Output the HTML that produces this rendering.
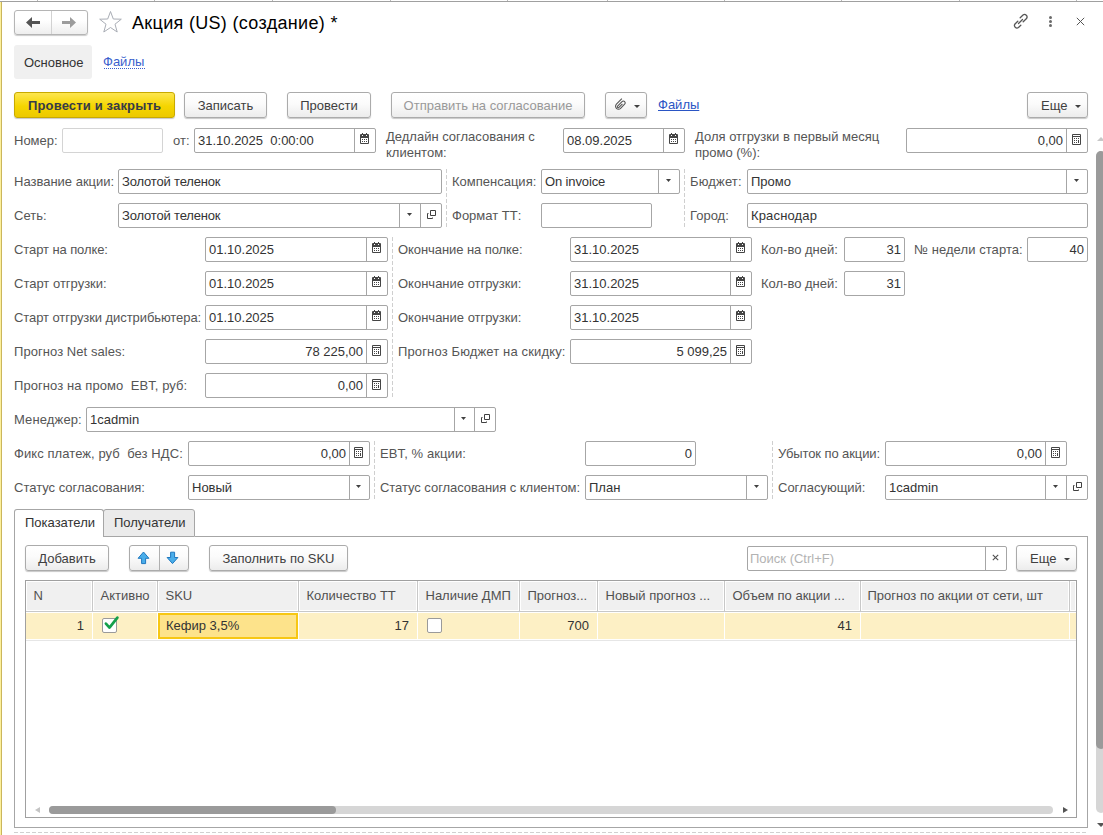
<!DOCTYPE html><html><head><meta charset="utf-8"><style>
*{box-sizing:border-box;margin:0;padding:0}
html,body{width:1103px;height:835px;overflow:hidden;background:#fff}
body{position:relative;font-family:"Liberation Sans",sans-serif;font-size:13px;color:#4d4d4d}
.a{position:absolute}
.l{position:absolute;white-space:nowrap;color:#555;line-height:25px;height:25px}
.f{position:absolute;height:25px;border:1px solid #a6a6a6;border-radius:2px;background:#fff}
.t{position:absolute;top:0;line-height:23px;white-space:nowrap;color:#333}
.d{position:absolute;top:0;width:1px;height:23px;background:#a6a6a6}
.btn{position:absolute;height:26px;border:1px solid #ababab;border-radius:3px;background:linear-gradient(#fff 0%,#fbfbfb 45%,#ececec 100%);box-shadow:0 1px 1px rgba(0,0,0,.22);color:#404040;text-align:center;line-height:25px;white-space:nowrap}
.vd{position:absolute;width:1px;background-image:linear-gradient(#cfcfcf 4px,transparent 4px);background-size:1px 6px}
</style></head><body>
<div class="a" style="left:0;top:1px;width:1103px;height:1px;background:#a0a0a0"></div>
<div class="a" style="left:37px;top:0;width:1px;height:1px;background:#b8b8b8"></div>
<div class="a" style="left:154px;top:0;width:1px;height:1px;background:#b8b8b8"></div>
<div class="a" style="left:272px;top:0;width:1px;height:1px;background:#b8b8b8"></div>
<div class="a" style="left:390px;top:0;width:1px;height:1px;background:#b8b8b8"></div>
<div class="a" style="left:507px;top:0;width:1px;height:1px;background:#b8b8b8"></div>
<div class="a" style="left:607px;top:0;width:1px;height:1px;background:#b8b8b8"></div>
<div class="a" style="left:724px;top:0;width:1px;height:1px;background:#b8b8b8"></div>
<div class="a" style="left:841px;top:0;width:1px;height:1px;background:#b8b8b8"></div>
<div class="a" style="left:959px;top:0;width:1px;height:1px;background:#b8b8b8"></div>
<div class="a" style="left:1076px;top:0;width:1px;height:1px;background:#b8b8b8"></div>
<div class="a" style="left:0;top:2px;width:1px;height:833px;background:#fcf09c"></div>
<div class="a" style="left:1px;top:2px;width:1px;height:833px;background:#cbb65c"></div>
<div class="a" style="left:14px;top:10px;width:74px;height:25px;border:1px solid #b5b5b5;border-radius:3px;background:linear-gradient(#fff 40%,#eeeeee);box-shadow:0 1px 1px rgba(0,0,0,.2)"></div>
<div class="a" style="left:51px;top:11px;width:1px;height:23px;background:#d2d2d2"></div>
<svg class="a" style="left:26px;top:17px" width="15" height="11" viewBox="0 0 15 11"><path d="M0 5.5 L6 0 L6 4 L14 4 L14 7 L6 7 L6 11 Z" fill="#545454"/></svg>
<svg class="a" style="left:62px;top:17px" width="15" height="11" viewBox="0 0 15 11"><path d="M14 5.5 L8 0 L8 4 L0 4 L0 7 L8 7 L8 11 Z" fill="#9c9c9c"/></svg>
<svg class="a" style="left:98px;top:10px" width="25" height="24" viewBox="0 0 25 24"><path d="M12.5 1.5 L15.3 9 L23.3 9.2 L17 14.2 L19.2 22 L12.5 17.5 L5.8 22 L8 14.2 L1.7 9.2 L9.7 9 Z" fill="none" stroke="#a9adb5" stroke-width="1"/></svg>
<div class="a" style="left:132px;top:12px;font-size:18px;letter-spacing:0.32px;color:#000;line-height:22px;white-space:nowrap">Акция (US) (создание) *</div>
<svg class="a" style="left:1012px;top:13px" width="17" height="17" viewBox="0 0 17 17"><g fill="none" stroke="#555" stroke-width="1.3" stroke-linecap="round"><path d="M6.5 10.5 L10.5 6.5"/><path d="M5.8 8.2 L3 11 a2.5 2.5 0 0 0 3.5 3.5 L8.8 12.2"/><path d="M8.2 4.8 L11 2 a2.5 2.5 0 0 1 3.5 3.5 L11.2 8.8"/></g></svg>
<div class="a" style="left:1049px;top:16px;width:3px;height:3px;border-radius:2px;background:#6a6a6a"></div>
<div class="a" style="left:1049px;top:20px;width:3px;height:3px;border-radius:2px;background:#6a6a6a"></div>
<div class="a" style="left:1049px;top:24px;width:3px;height:3px;border-radius:2px;background:#6a6a6a"></div>
<svg class="a" style="left:1076px;top:17px" width="9" height="9" viewBox="0 0 9 9"><path d="M0.8 0.8 L8.2 8.2 M8.2 0.8 L0.8 8.2" stroke="#555" stroke-width="1"/></svg>
<div class="a" style="left:14px;top:45px;width:78px;height:34px;background:#f0f0f0;border-radius:3px"></div>
<div class="l" style="left:24px;top:50px;color:#333">Основное</div>
<div class="a" style="left:103px;top:54px;color:#3a5fcd;line-height:15px;white-space:nowrap">Файлы</div>
<div class="a" style="left:104px;top:68px;width:41px;height:1px;background-image:linear-gradient(90deg,#3a5fcd 50%,transparent 50%);background-size:2px 1px"></div>
<div class="btn" style="left:14px;top:92px;width:161px;background:linear-gradient(#fde64f,#f5d500 55%,#ecc900);border-color:#c8aa00;font-weight:bold;color:#363a48;text-align:left;padding-left:13px;letter-spacing:0.15px;line-height:25px">Провести и закрыть</div>
<div class="btn" style="left:184px;top:92px;width:83px">Записать</div>
<div class="btn" style="left:287px;top:92px;width:84px">Провести</div>
<div class="btn" style="left:391px;top:92px;width:194px;color:#999">Отправить на согласование</div>
<div class="btn" style="left:605px;top:92px;width:42px"></div>
<svg class="a" style="left:608px;top:94px" width="26" height="22" viewBox="0 0 26 22"><g transform="translate(12.2,10.5) rotate(45)"><path d="M-2.95 -5.3 L-2.95 2.4 A2.95 2.95 0 0 0 2.95 2.4 L2.95 -3.35 A1.85 1.85 0 0 0 -0.75 -3.35 L-0.75 2.95 A0.95 0.95 0 0 0 1.15 2.95 L1.15 -2" fill="none" stroke="#555" stroke-width="1.1"/></g></svg>
<svg class="a" style="left:634px;top:105px" width="6" height="3" viewBox="0 0 6 3"><path d="M0 0 h6 l-3 3 z" fill="#404040"/></svg>
<div class="a" style="left:658px;top:97px;color:#2a55c4;line-height:15px;white-space:nowrap;text-decoration:underline">Файлы</div>
<div class="btn" style="left:1027px;top:92px;width:61px;text-align:left;padding-left:13px">Еще</div>
<svg class="a" style="left:1075px;top:105px" width="6" height="3" viewBox="0 0 6 3"><path d="M0 0 h6 l-3 3 z" fill="#404040"/></svg>
<div class="l" style="left:14px;top:128px;">Номер:</div>
<div class="f" style="left:62px;top:128px;width:101px;border-color:#d4d4d4">
</div>
<div class="l" style="left:173px;top:128px;">от:</div>
<div class="f" style="left:194px;top:128px;width:182px;border-color:#a6a6a6">
<div class="d" style="left:159px"></div>
<div class="t" style="left:3px;color:#333;letter-spacing:0px">31.10.2025&nbsp; 0:00:00</div>
</div>
<svg class="a" style="left:360px;top:133px" width="9" height="11" viewBox="0 0 9 11"><rect x="0" y="1" width="9" height="10" rx="1" fill="#454545"/><rect x="1" y="5" width="7" height="5" fill="#fff"/><rect x="2" y="2" width="1" height="1" fill="#fff"/><rect x="6" y="2" width="1" height="1" fill="#fff"/><rect x="2" y="0" width="1" height="1" fill="#454545"/><rect x="6" y="0" width="1" height="1" fill="#454545"/><g fill="#454545"><rect x="2" y="6" width="1" height="1"/><rect x="4" y="6" width="1" height="1"/><rect x="6" y="6" width="1" height="1"/><rect x="2" y="8" width="1" height="1"/><rect x="4" y="8" width="1" height="1"/><rect x="6" y="8" width="1" height="1"/></g></svg>
<div class="a" style="left:386px;top:128px;line-height:15.5px;white-space:nowrap;color:#555;padding-top:1px">Дедлайн согласования с<br>клиентом:</div>
<div class="f" style="left:563px;top:128px;width:122px;border-color:#a6a6a6">
<div class="d" style="left:99px"></div>
<div class="t" style="left:3px;color:#333;letter-spacing:0px">08.09.2025</div>
</div>
<svg class="a" style="left:669px;top:133px" width="9" height="11" viewBox="0 0 9 11"><rect x="0" y="1" width="9" height="10" rx="1" fill="#454545"/><rect x="1" y="5" width="7" height="5" fill="#fff"/><rect x="2" y="2" width="1" height="1" fill="#fff"/><rect x="6" y="2" width="1" height="1" fill="#fff"/><rect x="2" y="0" width="1" height="1" fill="#454545"/><rect x="6" y="0" width="1" height="1" fill="#454545"/><g fill="#454545"><rect x="2" y="6" width="1" height="1"/><rect x="4" y="6" width="1" height="1"/><rect x="6" y="6" width="1" height="1"/><rect x="2" y="8" width="1" height="1"/><rect x="4" y="8" width="1" height="1"/><rect x="6" y="8" width="1" height="1"/></g></svg>
<div class="a" style="left:695px;top:128px;line-height:15.5px;white-space:nowrap;color:#555;padding-top:1px">Доля отгрузки в первый месяц<br>промо (%):</div>
<div class="f" style="left:906px;top:128px;width:182px;border-color:#a6a6a6">
<div class="d" style="left:159px"></div>
<div class="t" style="right:24px;color:#333">0,00</div>
</div>
<svg class="a" style="left:1072px;top:134px" width="9" height="11" viewBox="0 0 9 11"><path d="M0.5 0.5 h8 v10 h-8 z" fill="none" stroke="#454545"/><rect x="0" y="2" width="9" height="1" fill="#454545"/><g fill="#454545"><rect x="2" y="4" width="1" height="1"/><rect x="4" y="4" width="1" height="1"/><rect x="6" y="4" width="1" height="1"/><rect x="2" y="6" width="1" height="1"/><rect x="4" y="6" width="1" height="1"/><rect x="6" y="6" width="1" height="3"/><rect x="2" y="8" width="1" height="1"/><rect x="4" y="8" width="1" height="1"/></g></svg>
<div class="l" style="left:14px;top:169px;">Название акции:</div>
<div class="f" style="left:118px;top:169px;width:324px;border-color:#a6a6a6">
<div class="t" style="left:3px;color:#333;letter-spacing:-0.17px">Золотой теленок</div>
</div>
<div class="l" style="left:452px;top:169px;">Компенсация:</div>
<div class="f" style="left:541px;top:169px;width:139px;border-color:#a6a6a6">
<div class="d" style="left:116px"></div>
<div class="t" style="left:3px;color:#333;letter-spacing:-0.13px">On invoice</div>
</div>
<svg class="a" style="left:666px;top:179px" width="5" height="3" viewBox="0 0 5 3"><path d="M0 0 h5 l-2.5 3 z" fill="#404040"/></svg>
<div class="l" style="left:690px;top:169px;letter-spacing:0.15px">Бюджет:</div>
<div class="f" style="left:747px;top:169px;width:341px;border-color:#a6a6a6">
<div class="d" style="left:318px"></div>
<div class="t" style="left:3px;color:#333;letter-spacing:0px">Промо</div>
</div>
<svg class="a" style="left:1074px;top:179px" width="5" height="3" viewBox="0 0 5 3"><path d="M0 0 h5 l-2.5 3 z" fill="#404040"/></svg>
<div class="l" style="left:14px;top:203px;">Сеть:</div>
<div class="f" style="left:118px;top:203px;width:324px;border-color:#a6a6a6">
<div class="d" style="left:280px"></div>
<div class="d" style="left:301px"></div>
<div class="t" style="left:3px;color:#333;letter-spacing:-0.17px">Золотой теленок</div>
</div>
<svg class="a" style="left:407px;top:213px" width="5" height="3" viewBox="0 0 5 3"><path d="M0 0 h5 l-2.5 3 z" fill="#404040"/></svg>
<svg class="a" style="left:427px;top:210px" width="9" height="9" viewBox="0 0 9 9"><path d="M3.5 0.5 h5 v5 h-5 z" fill="none" stroke="#404040"/><path d="M1.5 3.5 H0.5 V8.5 H5.5 V7.5" fill="none" stroke="#404040"/></svg>
<div class="l" style="left:452px;top:203px;">Формат ТТ:</div>
<div class="f" style="left:541px;top:203px;width:111px;border-color:#a6a6a6">
</div>
<div class="l" style="left:690px;top:203px;">Город:</div>
<div class="f" style="left:747px;top:203px;width:341px;border-color:#a6a6a6">
<div class="t" style="left:3px;color:#333;letter-spacing:0.15px">Краснодар</div>
</div>
<div class="vd" style="left:446px;top:169px;height:59px"></div>
<div class="vd" style="left:684px;top:169px;height:59px"></div>
<div class="l" style="left:14px;top:237px;letter-spacing:-0.09px">Старт на полке:</div>
<div class="f" style="left:205px;top:237px;width:183px;border-color:#a6a6a6">
<div class="d" style="left:160px"></div>
<div class="t" style="left:3px;color:#333;letter-spacing:0px">01.10.2025</div>
</div>
<svg class="a" style="left:372px;top:242px" width="9" height="11" viewBox="0 0 9 11"><rect x="0" y="1" width="9" height="10" rx="1" fill="#454545"/><rect x="1" y="5" width="7" height="5" fill="#fff"/><rect x="2" y="2" width="1" height="1" fill="#fff"/><rect x="6" y="2" width="1" height="1" fill="#fff"/><rect x="2" y="0" width="1" height="1" fill="#454545"/><rect x="6" y="0" width="1" height="1" fill="#454545"/><g fill="#454545"><rect x="2" y="6" width="1" height="1"/><rect x="4" y="6" width="1" height="1"/><rect x="6" y="6" width="1" height="1"/><rect x="2" y="8" width="1" height="1"/><rect x="4" y="8" width="1" height="1"/><rect x="6" y="8" width="1" height="1"/></g></svg>
<div class="l" style="left:398px;top:237px;letter-spacing:-0.07px">Окончание на полке:</div>
<div class="f" style="left:570px;top:237px;width:182px;border-color:#a6a6a6">
<div class="d" style="left:159px"></div>
<div class="t" style="left:3px;color:#333;letter-spacing:0px">31.10.2025</div>
</div>
<svg class="a" style="left:736px;top:242px" width="9" height="11" viewBox="0 0 9 11"><rect x="0" y="1" width="9" height="10" rx="1" fill="#454545"/><rect x="1" y="5" width="7" height="5" fill="#fff"/><rect x="2" y="2" width="1" height="1" fill="#fff"/><rect x="6" y="2" width="1" height="1" fill="#fff"/><rect x="2" y="0" width="1" height="1" fill="#454545"/><rect x="6" y="0" width="1" height="1" fill="#454545"/><g fill="#454545"><rect x="2" y="6" width="1" height="1"/><rect x="4" y="6" width="1" height="1"/><rect x="6" y="6" width="1" height="1"/><rect x="2" y="8" width="1" height="1"/><rect x="4" y="8" width="1" height="1"/><rect x="6" y="8" width="1" height="1"/></g></svg>
<div class="l" style="left:761px;top:237px;">Кол-во дней:</div>
<div class="f" style="left:844px;top:237px;width:61px;border-color:#a6a6a6">
<div class="t" style="right:3px;color:#333">31</div>
</div>
<div class="l" style="left:914px;top:237px;letter-spacing:0.07px">№ недели старта:</div>
<div class="f" style="left:1027px;top:237px;width:61px;border-color:#a6a6a6">
<div class="t" style="right:3px;color:#333">40</div>
</div>
<div class="l" style="left:14px;top:271px;">Старт отгрузки:</div>
<div class="f" style="left:205px;top:271px;width:183px;border-color:#a6a6a6">
<div class="d" style="left:160px"></div>
<div class="t" style="left:3px;color:#333;letter-spacing:0px">01.10.2025</div>
</div>
<svg class="a" style="left:372px;top:276px" width="9" height="11" viewBox="0 0 9 11"><rect x="0" y="1" width="9" height="10" rx="1" fill="#454545"/><rect x="1" y="5" width="7" height="5" fill="#fff"/><rect x="2" y="2" width="1" height="1" fill="#fff"/><rect x="6" y="2" width="1" height="1" fill="#fff"/><rect x="2" y="0" width="1" height="1" fill="#454545"/><rect x="6" y="0" width="1" height="1" fill="#454545"/><g fill="#454545"><rect x="2" y="6" width="1" height="1"/><rect x="4" y="6" width="1" height="1"/><rect x="6" y="6" width="1" height="1"/><rect x="2" y="8" width="1" height="1"/><rect x="4" y="8" width="1" height="1"/><rect x="6" y="8" width="1" height="1"/></g></svg>
<div class="l" style="left:398px;top:271px;">Окончание отгрузки:</div>
<div class="f" style="left:570px;top:271px;width:182px;border-color:#a6a6a6">
<div class="d" style="left:159px"></div>
<div class="t" style="left:3px;color:#333;letter-spacing:0px">31.10.2025</div>
</div>
<svg class="a" style="left:736px;top:276px" width="9" height="11" viewBox="0 0 9 11"><rect x="0" y="1" width="9" height="10" rx="1" fill="#454545"/><rect x="1" y="5" width="7" height="5" fill="#fff"/><rect x="2" y="2" width="1" height="1" fill="#fff"/><rect x="6" y="2" width="1" height="1" fill="#fff"/><rect x="2" y="0" width="1" height="1" fill="#454545"/><rect x="6" y="0" width="1" height="1" fill="#454545"/><g fill="#454545"><rect x="2" y="6" width="1" height="1"/><rect x="4" y="6" width="1" height="1"/><rect x="6" y="6" width="1" height="1"/><rect x="2" y="8" width="1" height="1"/><rect x="4" y="8" width="1" height="1"/><rect x="6" y="8" width="1" height="1"/></g></svg>
<div class="l" style="left:761px;top:271px;">Кол-во дней:</div>
<div class="f" style="left:844px;top:271px;width:61px;border-color:#a6a6a6">
<div class="t" style="right:3px;color:#333">31</div>
</div>
<div class="l" style="left:14px;top:305px;letter-spacing:-0.075px">Старт отгрузки дистрибьютера:</div>
<div class="f" style="left:205px;top:305px;width:183px;border-color:#a6a6a6">
<div class="d" style="left:160px"></div>
<div class="t" style="left:3px;color:#333;letter-spacing:0px">01.10.2025</div>
</div>
<svg class="a" style="left:372px;top:310px" width="9" height="11" viewBox="0 0 9 11"><rect x="0" y="1" width="9" height="10" rx="1" fill="#454545"/><rect x="1" y="5" width="7" height="5" fill="#fff"/><rect x="2" y="2" width="1" height="1" fill="#fff"/><rect x="6" y="2" width="1" height="1" fill="#fff"/><rect x="2" y="0" width="1" height="1" fill="#454545"/><rect x="6" y="0" width="1" height="1" fill="#454545"/><g fill="#454545"><rect x="2" y="6" width="1" height="1"/><rect x="4" y="6" width="1" height="1"/><rect x="6" y="6" width="1" height="1"/><rect x="2" y="8" width="1" height="1"/><rect x="4" y="8" width="1" height="1"/><rect x="6" y="8" width="1" height="1"/></g></svg>
<div class="l" style="left:398px;top:305px;">Окончание отгрузки:</div>
<div class="f" style="left:570px;top:305px;width:182px;border-color:#a6a6a6">
<div class="d" style="left:159px"></div>
<div class="t" style="left:3px;color:#333;letter-spacing:0px">31.10.2025</div>
</div>
<svg class="a" style="left:736px;top:310px" width="9" height="11" viewBox="0 0 9 11"><rect x="0" y="1" width="9" height="10" rx="1" fill="#454545"/><rect x="1" y="5" width="7" height="5" fill="#fff"/><rect x="2" y="2" width="1" height="1" fill="#fff"/><rect x="6" y="2" width="1" height="1" fill="#fff"/><rect x="2" y="0" width="1" height="1" fill="#454545"/><rect x="6" y="0" width="1" height="1" fill="#454545"/><g fill="#454545"><rect x="2" y="6" width="1" height="1"/><rect x="4" y="6" width="1" height="1"/><rect x="6" y="6" width="1" height="1"/><rect x="2" y="8" width="1" height="1"/><rect x="4" y="8" width="1" height="1"/><rect x="6" y="8" width="1" height="1"/></g></svg>
<div class="l" style="left:14px;top:339px;letter-spacing:0.06px">Прогноз Net sales:</div>
<div class="f" style="left:205px;top:339px;width:183px;border-color:#a6a6a6">
<div class="d" style="left:160px"></div>
<div class="t" style="right:24px;color:#333">78 225,00</div>
</div>
<svg class="a" style="left:372px;top:345px" width="9" height="11" viewBox="0 0 9 11"><path d="M0.5 0.5 h8 v10 h-8 z" fill="none" stroke="#454545"/><rect x="0" y="2" width="9" height="1" fill="#454545"/><g fill="#454545"><rect x="2" y="4" width="1" height="1"/><rect x="4" y="4" width="1" height="1"/><rect x="6" y="4" width="1" height="1"/><rect x="2" y="6" width="1" height="1"/><rect x="4" y="6" width="1" height="1"/><rect x="6" y="6" width="1" height="3"/><rect x="2" y="8" width="1" height="1"/><rect x="4" y="8" width="1" height="1"/></g></svg>
<div class="l" style="left:398px;top:339px;letter-spacing:0.14px">Прогноз Бюджет на скидку:</div>
<div class="f" style="left:570px;top:339px;width:182px;border-color:#a6a6a6">
<div class="d" style="left:159px"></div>
<div class="t" style="right:24px;color:#333">5 099,25</div>
</div>
<svg class="a" style="left:736px;top:345px" width="9" height="11" viewBox="0 0 9 11"><path d="M0.5 0.5 h8 v10 h-8 z" fill="none" stroke="#454545"/><rect x="0" y="2" width="9" height="1" fill="#454545"/><g fill="#454545"><rect x="2" y="4" width="1" height="1"/><rect x="4" y="4" width="1" height="1"/><rect x="6" y="4" width="1" height="1"/><rect x="2" y="6" width="1" height="1"/><rect x="4" y="6" width="1" height="1"/><rect x="6" y="6" width="1" height="3"/><rect x="2" y="8" width="1" height="1"/><rect x="4" y="8" width="1" height="1"/></g></svg>
<div class="l" style="left:14px;top:373px;letter-spacing:0.08px">Прогноз на промо&nbsp; EBT, руб:</div>
<div class="f" style="left:205px;top:373px;width:183px;border-color:#a6a6a6">
<div class="d" style="left:160px"></div>
<div class="t" style="right:24px;color:#333">0,00</div>
</div>
<svg class="a" style="left:372px;top:379px" width="9" height="11" viewBox="0 0 9 11"><path d="M0.5 0.5 h8 v10 h-8 z" fill="none" stroke="#454545"/><rect x="0" y="2" width="9" height="1" fill="#454545"/><g fill="#454545"><rect x="2" y="4" width="1" height="1"/><rect x="4" y="4" width="1" height="1"/><rect x="6" y="4" width="1" height="1"/><rect x="2" y="6" width="1" height="1"/><rect x="4" y="6" width="1" height="1"/><rect x="6" y="6" width="1" height="3"/><rect x="2" y="8" width="1" height="1"/><rect x="4" y="8" width="1" height="1"/></g></svg>
<div class="vd" style="left:392px;top:237px;height:161px"></div>
<div class="l" style="left:14px;top:407px;letter-spacing:0.13px">Менеджер:</div>
<div class="f" style="left:86px;top:407px;width:410px;border-color:#a6a6a6">
<div class="d" style="left:367px"></div>
<div class="d" style="left:387px"></div>
<div class="t" style="left:3px;color:#333;letter-spacing:0px">1cadmin</div>
</div>
<svg class="a" style="left:461px;top:417px" width="5" height="3" viewBox="0 0 5 3"><path d="M0 0 h5 l-2.5 3 z" fill="#404040"/></svg>
<svg class="a" style="left:481px;top:414px" width="9" height="9" viewBox="0 0 9 9"><path d="M3.5 0.5 h5 v5 h-5 z" fill="none" stroke="#404040"/><path d="M1.5 3.5 H0.5 V8.5 H5.5 V7.5" fill="none" stroke="#404040"/></svg>
<div class="l" style="left:14px;top:441px;letter-spacing:0.075px">Фикс платеж, руб&nbsp; без НДС:</div>
<div class="f" style="left:188px;top:441px;width:182px;border-color:#a6a6a6">
<div class="d" style="left:160px"></div>
<div class="t" style="right:23px;color:#333">0,00</div>
</div>
<svg class="a" style="left:354px;top:447px" width="9" height="11" viewBox="0 0 9 11"><path d="M0.5 0.5 h8 v10 h-8 z" fill="none" stroke="#454545"/><rect x="0" y="2" width="9" height="1" fill="#454545"/><g fill="#454545"><rect x="2" y="4" width="1" height="1"/><rect x="4" y="4" width="1" height="1"/><rect x="6" y="4" width="1" height="1"/><rect x="2" y="6" width="1" height="1"/><rect x="4" y="6" width="1" height="1"/><rect x="6" y="6" width="1" height="3"/><rect x="2" y="8" width="1" height="1"/><rect x="4" y="8" width="1" height="1"/></g></svg>
<div class="l" style="left:380px;top:441px;letter-spacing:0.1px">EBT, % акции:</div>
<div class="f" style="left:585px;top:441px;width:111px;border-color:#a6a6a6">
<div class="t" style="right:3px;color:#333">0</div>
</div>
<div class="l" style="left:778px;top:441px;letter-spacing:-0.09px">Убыток по акции:</div>
<div class="f" style="left:885px;top:441px;width:182px;border-color:#a6a6a6">
<div class="d" style="left:159px"></div>
<div class="t" style="right:24px;color:#333">0,00</div>
</div>
<svg class="a" style="left:1051px;top:447px" width="9" height="11" viewBox="0 0 9 11"><path d="M0.5 0.5 h8 v10 h-8 z" fill="none" stroke="#454545"/><rect x="0" y="2" width="9" height="1" fill="#454545"/><g fill="#454545"><rect x="2" y="4" width="1" height="1"/><rect x="4" y="4" width="1" height="1"/><rect x="6" y="4" width="1" height="1"/><rect x="2" y="6" width="1" height="1"/><rect x="4" y="6" width="1" height="1"/><rect x="6" y="6" width="1" height="3"/><rect x="2" y="8" width="1" height="1"/><rect x="4" y="8" width="1" height="1"/></g></svg>
<div class="l" style="left:14px;top:475px;">Статус согласования:</div>
<div class="f" style="left:188px;top:475px;width:182px;border-color:#a6a6a6">
<div class="d" style="left:160px"></div>
<div class="t" style="left:3px;color:#333;letter-spacing:0px">Новый</div>
</div>
<svg class="a" style="left:356px;top:485px" width="5" height="3" viewBox="0 0 5 3"><path d="M0 0 h5 l-2.5 3 z" fill="#404040"/></svg>
<div class="l" style="left:380px;top:475px;letter-spacing:-0.05px">Статус согласования с клиентом:</div>
<div class="f" style="left:585px;top:475px;width:183px;border-color:#a6a6a6">
<div class="d" style="left:160px"></div>
<div class="t" style="left:3px;color:#333;letter-spacing:0px">План</div>
</div>
<svg class="a" style="left:754px;top:485px" width="5" height="3" viewBox="0 0 5 3"><path d="M0 0 h5 l-2.5 3 z" fill="#404040"/></svg>
<div class="l" style="left:778px;top:475px;">Согласующий:</div>
<div class="f" style="left:885px;top:475px;width:203px;border-color:#a6a6a6">
<div class="d" style="left:159px"></div>
<div class="d" style="left:180px"></div>
<div class="t" style="left:3px;color:#333;letter-spacing:0px">1cadmin</div>
</div>
<svg class="a" style="left:1053px;top:485px" width="5" height="3" viewBox="0 0 5 3"><path d="M0 0 h5 l-2.5 3 z" fill="#404040"/></svg>
<svg class="a" style="left:1073px;top:482px" width="9" height="9" viewBox="0 0 9 9"><path d="M3.5 0.5 h5 v5 h-5 z" fill="none" stroke="#404040"/><path d="M1.5 3.5 H0.5 V8.5 H5.5 V7.5" fill="none" stroke="#404040"/></svg>
<div class="vd" style="left:374px;top:441px;height:59px"></div>
<div class="vd" style="left:772px;top:441px;height:59px"></div>
<div class="a" style="left:14px;top:536px;width:1074px;height:292px;border:1px solid #a6a6a6;border-top:none"></div>
<div class="a" style="left:195px;top:536px;width:893px;height:1px;background:#a6a6a6"></div>
<div class="a" style="left:103px;top:509px;width:92px;height:28px;border:1px solid #a6a6a6;border-radius:3px 3px 0 0;background:#ebebeb"></div>
<div class="a" style="left:14px;top:509px;width:90px;height:28px;border:1px solid #a6a6a6;border-bottom:none;border-radius:3px 3px 0 0;background:#fff"></div>
<div class="a" style="left:25px;top:515px;line-height:16px;color:#333;white-space:nowrap">Показатели</div>
<div class="a" style="left:114px;top:515px;line-height:16px;color:#333;white-space:nowrap">Получатели</div>
<div class="btn" style="left:25px;top:545px;width:84px;height:26px">Добавить</div>
<div class="btn" style="left:129px;top:545px;width:60px;height:26px"></div>
<div class="a" style="left:159px;top:546px;width:1px;height:24px;background:#b0b0b0"></div>
<svg class="a" style="left:137px;top:551px" width="13" height="14" viewBox="0 0 13 14"><path d="M6.5 1 L11.9 7.3 L8.6 7.3 L8.6 12.6 L4.6 12.6 L4.6 7.3 L1.1 7.3 Z" fill="#4aaeea" stroke="#1f78bf" stroke-width="1"/></svg>
<svg class="a" style="left:166px;top:551px" width="13" height="14" viewBox="0 0 13 14"><path d="M6.5 12.6 L11.9 6.5 L8.6 6.5 L8.6 1.2 L4.6 1.2 L4.6 6.5 L1.1 6.5 Z" fill="#4aaeea" stroke="#1f78bf" stroke-width="1"/></svg>
<div class="btn" style="left:209px;top:545px;width:139px;height:26px">Заполнить по SKU</div>
<div class="f" style="left:747px;top:546px;width:260px;height:25px"><div class="d" style="left:237px;height:23px"></div><div class="t" style="left:2px;line-height:23px;color:#b3b3b3">Поиск (Ctrl+F)</div></div>
<svg class="a" style="left:992px;top:554px" width="7" height="7" viewBox="0 0 7 7"><path d="M0.8 0.8 L6.2 6.2 M6.2 0.8 L0.8 6.2" stroke="#505050" stroke-width="1.1"/></svg>
<div class="btn" style="left:1016px;top:545px;width:61px;height:26px;text-align:left;padding-left:13px">Еще</div>
<svg class="a" style="left:1064px;top:558px" width="6" height="3" viewBox="0 0 6 3"><path d="M0 0 h6 l-3 3 z" fill="#404040"/></svg>
<div class="a" style="left:25px;top:580px;width:1052px;height:238px;border:1px solid #a0a0a0;background:#fff"></div>
<div class="a" style="left:27px;top:582px;width:64px;height:28px;background:#f0f0f0"></div>
<div class="a" style="left:26px;top:613px;width:66px;height:26px;background:#fdf0c5"></div>
<div class="a" style="left:94px;top:582px;width:62px;height:28px;background:#f0f0f0"></div>
<div class="a" style="left:93px;top:613px;width:64px;height:26px;background:#fdf0c5"></div>
<div class="a" style="left:159px;top:582px;width:138px;height:28px;background:#f0f0f0"></div>
<div class="a" style="left:158px;top:613px;width:140px;height:26px;background:#fdf0c5"></div>
<div class="a" style="left:300px;top:582px;width:116px;height:28px;background:#f0f0f0"></div>
<div class="a" style="left:299px;top:613px;width:118px;height:26px;background:#fdf0c5"></div>
<div class="a" style="left:419px;top:582px;width:99px;height:28px;background:#f0f0f0"></div>
<div class="a" style="left:418px;top:613px;width:101px;height:26px;background:#fdf0c5"></div>
<div class="a" style="left:521px;top:582px;width:75px;height:28px;background:#f0f0f0"></div>
<div class="a" style="left:520px;top:613px;width:77px;height:26px;background:#fdf0c5"></div>
<div class="a" style="left:599px;top:582px;width:124px;height:28px;background:#f0f0f0"></div>
<div class="a" style="left:598px;top:613px;width:126px;height:26px;background:#fdf0c5"></div>
<div class="a" style="left:726px;top:582px;width:133px;height:28px;background:#f0f0f0"></div>
<div class="a" style="left:725px;top:613px;width:135px;height:26px;background:#fdf0c5"></div>
<div class="a" style="left:862px;top:582px;width:206px;height:28px;background:#f0f0f0"></div>
<div class="a" style="left:861px;top:613px;width:208px;height:26px;background:#fdf0c5"></div>
<div class="a" style="left:1071px;top:582px;width:4px;height:28px;background:#f0f0f0"></div>
<div class="a" style="left:1070px;top:613px;width:6px;height:26px;background:#fdf0c5"></div>
<div class="a" style="left:92px;top:581px;width:1px;height:30px;background:#c8c8c8"></div>
<div class="a" style="left:157px;top:581px;width:1px;height:30px;background:#c8c8c8"></div>
<div class="a" style="left:298px;top:581px;width:1px;height:30px;background:#c8c8c8"></div>
<div class="a" style="left:417px;top:581px;width:1px;height:30px;background:#c8c8c8"></div>
<div class="a" style="left:519px;top:581px;width:1px;height:30px;background:#c8c8c8"></div>
<div class="a" style="left:597px;top:581px;width:1px;height:30px;background:#c8c8c8"></div>
<div class="a" style="left:724px;top:581px;width:1px;height:30px;background:#c8c8c8"></div>
<div class="a" style="left:860px;top:581px;width:1px;height:30px;background:#c8c8c8"></div>
<div class="a" style="left:1069px;top:581px;width:1px;height:30px;background:#c8c8c8"></div>
<div class="a" style="left:26px;top:611px;width:1050px;height:1px;background:#c8c8c8"></div>
<div class="a" style="left:26px;top:640px;width:1050px;height:1px;background:#e6e6e6"></div>
<div class="a" style="left:33.5px;top:588px;line-height:16px;color:#505050;white-space:nowrap">N</div>
<div class="a" style="left:100.5px;top:588px;line-height:16px;color:#505050;white-space:nowrap">Активно</div>
<div class="a" style="left:165.5px;top:588px;line-height:16px;color:#505050;white-space:nowrap">SKU</div>
<div class="a" style="left:306.5px;top:588px;line-height:16px;color:#505050;white-space:nowrap">Количество ТТ</div>
<div class="a" style="left:425.5px;top:588px;line-height:16px;color:#505050;white-space:nowrap">Наличие ДМП</div>
<div class="a" style="left:527.5px;top:588px;line-height:16px;color:#505050;white-space:nowrap">Прогноз...</div>
<div class="a" style="left:605.5px;top:588px;line-height:16px;color:#505050;white-space:nowrap">Новый прогноз ...</div>
<div class="a" style="left:732.5px;top:588px;line-height:16px;color:#505050;white-space:nowrap">Объем по акции ...</div>
<div class="a" style="left:867.5px;top:588px;line-height:16px;color:#505050;white-space:nowrap">Прогноз по акции от сети, шт</div>
<div class="a" style="left:158px;top:613px;width:140px;height:26px;border:2px solid #f7c714;background:#fde38b"></div>
<div class="a" style="left:26px;top:618px;width:58px;text-align:right;line-height:16px;color:#333">1</div>
<div class="a" style="left:166px;top:618px;line-height:16px;color:#333;white-space:nowrap">Кефир 3,5%</div>
<div class="a" style="left:300px;top:618px;width:109px;text-align:right;line-height:16px;color:#333">17</div>
<div class="a" style="left:520px;top:618px;width:69px;text-align:right;line-height:16px;color:#333">700</div>
<div class="a" style="left:725px;top:618px;width:127px;text-align:right;line-height:16px;color:#333">41</div>
<div class="a" style="left:102px;top:618px;width:15px;height:15px;border:1px solid #9a9a9a;border-radius:2px;background:#fff"></div>
<svg class="a" style="left:103px;top:615px" width="17" height="16" viewBox="0 0 17 16"><path d="M2.9 8.6 L6.5 12.6 L14.4 2.6" fill="none" stroke="#14a04b" stroke-width="2.7" stroke-linecap="round" stroke-linejoin="round"/></svg>
<div class="a" style="left:427px;top:618px;width:15px;height:15px;border:1px solid #9a9a9a;border-radius:2px;background:#fff"></div>
<div class="a" style="left:49px;top:806px;width:1004px;height:8px;border-radius:4px;background:#d6d6d6"></div>
<div class="a" style="left:49px;top:806px;width:287px;height:8px;border-radius:4px;background:#9a9a9a"></div>
<svg class="a" style="left:35px;top:807px" width="5" height="6" viewBox="0 0 5 6"><path d="M5 0 L0 3 L5 6 Z" fill="#c4c4c4"/></svg>
<svg class="a" style="left:1063px;top:807px" width="5" height="6" viewBox="0 0 5 6"><path d="M0 0 L5 3 L0 6 Z" fill="#555"/></svg>
<div class="a" style="left:14px;top:832px;width:1072px;height:1px;background-image:linear-gradient(90deg,#d0d0d0 4px,transparent 4px);background-size:6px 1px"></div>
<div class="a" style="left:1096px;top:151px;width:10px;height:662px;border-radius:5px;background:#d6d6d6"></div>
<div class="a" style="left:1096px;top:151px;width:10px;height:598px;border-radius:5px;background:#9a9a9a"></div>
<svg class="a" style="left:1097px;top:137px" width="8" height="4" viewBox="0 0 8 4"><path d="M0 4 L4 0 L8 4 Z" fill="#c8c8c8"/></svg>
<svg class="a" style="left:1097px;top:823px" width="8" height="4" viewBox="0 0 8 4"><path d="M0 0 L4 4 L8 0 Z" fill="#555"/></svg>
</body></html>
